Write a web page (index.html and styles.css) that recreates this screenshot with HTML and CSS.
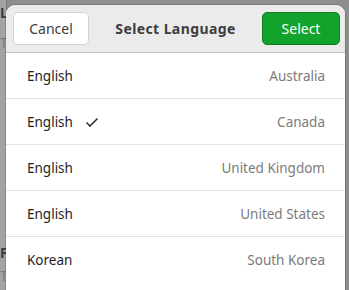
FILE: index.html
```html
<!DOCTYPE html>
<html>
<head>
<meta charset="utf-8">
<link rel="stylesheet" href="styles.css">
</head>
<body>
<div class="backdrop">
  <div class="bg-col">
    <span class="frag f1">L</span>
    <span class="frag f2">T</span>
    <span class="frag f3">F</span>
    <span class="frag f4">T</span>
  </div>
</div>
<div class="dialog">
  <div class="header">
    <button class="btn cancel">Cancel</button>
    <div class="title">Select Language</div>
    <button class="btn select">Select</button>
  </div>
  <ul class="list">
    <li class="row"><span class="lang">English</span><span class="region">Australia</span></li>
    <li class="row"><span class="lang">English<svg class="check" width="16" height="16" viewBox="0 0 16 16"><path d="M2.5 8.5 L6 12 L13.5 4.5" fill="none" stroke="#2e3436" stroke-width="1.6"/></svg></span><span class="region">Canada</span></li>
    <li class="row"><span class="lang">English</span><span class="region">United Kingdom</span></li>
    <li class="row"><span class="lang">English</span><span class="region">United States</span></li>
    <li class="row"><span class="lang">Korean</span><span class="region">South Korea</span></li>
  </ul>
</div>
</body>
</html>
```

FILE: styles.css
```css
html, body {
  margin: 0;
  padding: 0;
  width: 349px;
  height: 290px;
  overflow: hidden;
}
body {
  background: #8e8e8e;
  font-family: "Noto Sans", "Open Sans", sans-serif;
  position: relative;
}
.backdrop {
  height: 290px;
  display: flex;
}
.bg-col {
  width: 6px;
  background: #a3a3a3;
  border-right: 1px solid #7c7c7c;
  position: relative;
}
.frag {
  position: absolute;
  left: 0;
  font-size: 14px;
  font-weight: bold;
  color: #3a3a3a;
}
.f1 { top: 3px; }
.f2 { top: 33px; color: #7a7a7a; font-weight: normal; }
.f3 { top: 243px; }
.f4 { top: 266px; color: #7a7a7a; font-weight: normal; }

.dialog {
  position: absolute;
  left: 6px;
  top: 5px;
  bottom: 0;
  width: 339px;
  background: #fff;
  border-radius: 9px 9px 0 0;
  overflow: hidden;
  box-shadow: 0 0 0 1px rgba(0,0,0,0.15);
}
.header {
  display: flex;
  align-items: center;
  justify-content: space-between;
  background: #ebebeb;
  border-bottom: 1px solid #c2c2c2;
  padding: 7px 5px 7px 7px;
}
.btn {
  height: 33px;
  border-radius: 5px;
  font-family: "Noto Sans", "Open Sans", sans-serif;
  font-size: 14px;
  padding: 0;
}
.cancel {
  width: 76px;
  background: #fff;
  border: 1px solid #d3d3d3;
  color: #3c3c3c;
}
.select {
  width: 78px;
  background: #13a32c;
  border: 1px solid #0d7e20;
  color: #fff;
}
.title {
  font-size: 14px;
  font-weight: bold;
  color: #3d3d3d;
  letter-spacing: 0.4px;
}
.list {
  list-style: none;
  margin: 0;
  padding: 0;
}
.row {
  height: 45px;
  border-bottom: 1px solid #e2e2e2;
  display: flex;
  align-items: center;
  justify-content: space-between;
  padding: 0 20px 0 21px;
  font-size: 13.5px;
}
.row:last-child {
  border-bottom: none;
}
.lang {
  color: #1e1e1e;
  display: flex;
  align-items: center;
}
.check {
  margin-left: 11px;
}
.region {
  color: #7b7b7b;
}
```
